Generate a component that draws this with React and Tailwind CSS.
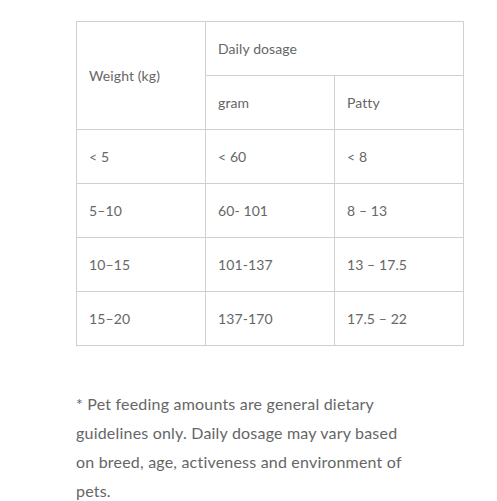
import React from "react";

const rows = [
  ["< 5", "< 60", "< 8"],
  ["5–10", "60- 101", "8 – 13"],
  ["10–15", "101-137", "13 – 17.5"],
  ["15–20", "137-170", "17.5 – 22"],
];

const cell = "border border-[#d0d0d0] h-[54px] px-3 text-left align-middle font-normal";

export default function App() {
  return (
    <div
      className="bg-white min-h-screen pt-[21px] pl-[76px] text-[#666]"
      style={{ fontFamily: "Lato, 'Open Sans', sans-serif" }}
    >
      <table className="border-collapse w-[388px] table-fixed text-[14px] tracking-[0.1px]">
        <thead>
          <tr>
            <th rowSpan={2} className={cell + " w-[129px]"}>
              Weight (kg)
            </th>
            <th colSpan={2} className={cell}>
              Daily dosage
            </th>
          </tr>
          <tr>
            <th className={cell + " w-[129px]"}>gram</th>
            <th className={cell}>Patty</th>
          </tr>
        </thead>
        <tbody>
          {rows.map((r, i) => (
            <tr key={i}>
              {r.map((c, j) => (
                <td key={j} className={cell}>
                  {c}
                </td>
              ))}
            </tr>
          ))}
        </tbody>
      </table>
      <p className="mt-[43px] w-[335px] text-[16px] leading-[29px] tracking-[0.2px]">
        * Pet feeding amounts are general dietary guidelines only. Daily dosage
        may vary based on breed, age, activeness and environment of pets.
      </p>
    </div>
  );
}
